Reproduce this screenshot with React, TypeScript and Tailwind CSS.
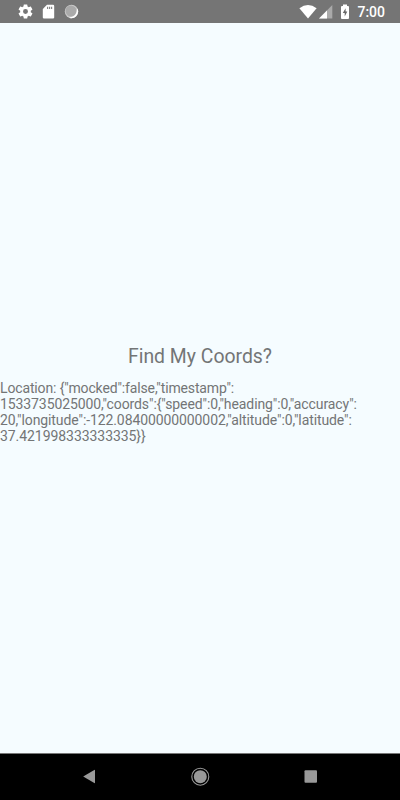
const lines = [
  { text: 'Location: {"mocked":false,"timestamp":', tracking: 'tracking-[-0.14px]' },
  { text: '1533735025000,"coords":{"speed":0,"heading":0,"accuracy":', tracking: 'tracking-[-0.095px]' },
  { text: '20,"longitude":-122.08400000000002,"altitude":0,"latitude":', tracking: 'tracking-[-0.095px]' },
  { text: '37.421998333333335}}', tracking: 'tracking-[-0.06px]' },
];

function StatusBar() {
  return (
    <header className="flex h-[23px] items-center justify-between bg-[#757575] pr-[15px] pl-[17px] text-white">
      <div className="flex items-center">
        <svg className="h-[17px] w-[17px]" viewBox="0 0 24 24" fill="currentColor">
          <path d="M19.43 12.98c.04-.32.07-.64.07-.98s-.03-.66-.07-.98l2.11-1.65c.19-.15.24-.42.12-.64l-2-3.46c-.12-.22-.39-.3-.61-.22l-2.49 1c-.52-.4-1.08-.73-1.69-.98l-.38-2.65C14.46 2.18 14.25 2 14 2h-4c-.25 0-.46.18-.49.42l-.38 2.65c-.61.25-1.17.59-1.69.98l-2.49-1c-.23-.09-.49 0-.61.22l-2 3.46c-.13.22-.07.49.12.64l2.11 1.65c-.04.32-.07.65-.07.98s.03.66.07.98l-2.11 1.65c-.19.15-.24.42-.12.64l2 3.46c.12.22.39.3.61.22l2.49-1c.52.4 1.08.73 1.69.98l.38 2.65c.03.24.24.42.49.42h4c.25 0 .46-.18.49-.42l.38-2.65c.61-.25 1.17-.59 1.69-.98l2.49 1c.23.09.49 0 .61-.22l2-3.46c.12-.22.07-.49-.12-.64l-2.11-1.65zM12 15.5a3.5 3.5 0 1 1 0-7 3.5 3.5 0 0 1 0 7z" />
        </svg>
        <svg className="ml-2 h-[15px] w-[13px]" viewBox="0 0 13 15">
          <path d="M5 .8h6q1.200 0 1.200 1.200v11.500q0 1-1.200 1H2q-1.200 0-1.200-1V5z" fill="white" />
          <path d="M5 2.800h1.200V5H5zM7 2.800h1.200V5H7zM9 2.800h1.200V5H9z" fill="#888" />
        </svg>
        <svg className="ml-[9px] h-[15px] w-[15px]" viewBox="0 0 15 15">
          <circle cx="7.5" cy="7.5" r="6.7" fill="#ccc" />
          <path d="M13.4 4.500A6.700 6.700 0 0 1 5 13.700Q11 13 13.4 4.500z" fill="white" />
          <circle cx="7" cy="7" r="5.5" fill="#aaa" />
        </svg>
      </div>
      <div className="flex items-center">
        <svg className="h-[15px] w-[18px]" viewBox="0 0 18 15">
          <path d="M.4 4.3Q9-2.3 17.6 4.3L9 14.5z" fill="white" />
        </svg>
        <svg className="ml-[2px] h-[15px] w-[14px]" viewBox="0 0 14 15">
          <path d="M13.3 1v13.500H0z" fill="#aaa" />
          <path d="M8 6.500v8H0z" fill="white" />
        </svg>
        <svg className="ml-[7px] h-[16px] w-[10px]" viewBox="0 0 10 16">
          <path d="M3 .5h4V2h1q1 0 1 1v11q0 1-1 1H2q-1 0-1-1V3q0-1 1-1h1z" fill="white" />
          <path d="M5.600 4.300 2.800 9h1.900v3.500l2.600-5H5.600z" fill="#666" />
        </svg>
        <span className="mt-px ml-[7px] text-[14px] leading-[22px] font-medium">7:00</span>
      </div>
    </header>
  );
}

function NavigationBar() {
  return (
    <nav className="flex h-[47px] items-center justify-between border-t border-[#777] bg-black pr-[81px] pl-[82px] text-[#999]">
      <svg className="h-4 w-4" viewBox="0 0 16 16" fill="currentColor">
        <path d="M1.200 7.500 12.300 1q.700-.4.700.4v12.200q0 .8-.7.4z" />
      </svg>
      <svg className="h-5 w-5" viewBox="0 0 20 20">
        <circle cx="9.300" cy="9.700" r="8.500" fill="none" stroke="currentColor" strokeWidth="1.100" />
        <circle cx="9.300" cy="9.700" r="6.500" fill="currentColor" />
      </svg>
      <svg className="h-4 w-4" viewBox="0 0 16 16" fill="currentColor">
        <rect x="1.500" y="1.300" width="12.500" height="12.500" rx="1" />
      </svg>
    </nav>
  );
}

export default function App() {
  return (
    <div className="flex h-[800px] w-[400px] flex-col overflow-hidden bg-[#f5fcff] font-['Roboto',sans-serif]">
      <StatusBar />
      <main className="flex flex-1 flex-col pt-[322px] text-[#737576]">
        <h1 className="text-center text-[19.4px] leading-6">Find My Coords?</h1>
        <p className="mt-[11px] text-[14px] leading-4 whitespace-nowrap">
          {lines.map(({ text, tracking }) => (
            <span key={text} className={`block ${tracking}`}>{text}</span>
          ))}
        </p>
      </main>
      <NavigationBar />
    </div>
  );
}
